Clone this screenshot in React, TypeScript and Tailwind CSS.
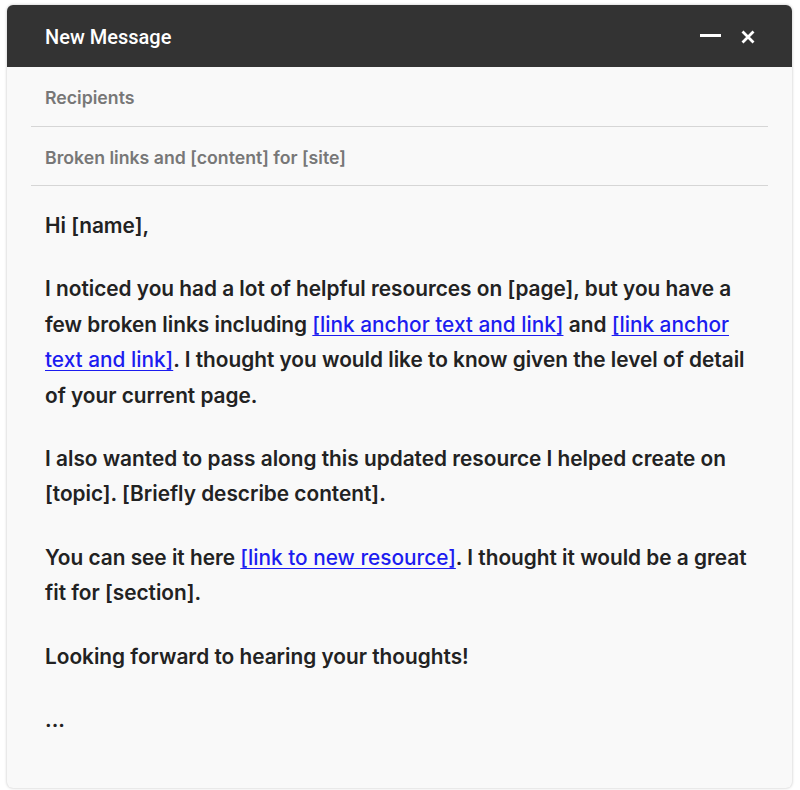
import React from "react";

const link = "text-[#1c1cf0] font-medium underline underline-offset-[3px] decoration-1";

export default function App() {
  return (
    <div className="min-h-[790px] bg-white pl-[7px] pt-[5px] font-['Inter',sans-serif]">
      <div className="w-[785px] h-[783px] rounded-md bg-[#f9f9f9] shadow-[0_0_3px_rgba(0,0,0,0.25)] overflow-hidden flex flex-col">
        <div className="h-[62px] shrink-0 bg-[#333333] flex items-center justify-between pl-[38px] pr-[37px] pt-[2px]">
          <span className="text-white text-[20px] font-medium font-['Roboto',sans-serif]">New Message</span>
          <div className="flex items-center gap-[20px]">
            <svg width="21" height="14" viewBox="0 0 21 14">
              <rect x="0" y="4" width="21" height="3" fill="#fff" />
            </svg>
            <svg width="14" height="14" viewBox="0 0 14 14">
              <path d="M1.5 1.5 L12.5 12.5 M12.5 1.5 L1.5 12.5" stroke="#fff" strokeWidth="2.8" />
            </svg>
          </div>
        </div>

        <div className="mx-[24px] h-[60px] border-b border-[#d6d6d6] flex items-center pl-[14px] pt-[4px]">
          <span className="text-[17.7px] font-semibold text-[#777]">Recipients</span>
        </div>
        <div className="mx-[24px] h-[59px] border-b border-[#d6d6d6] flex items-center pl-[14px] pt-[4px]">
          <span className="text-[17.7px] font-semibold text-[#777]">Broken links and [content] for [site]</span>
        </div>

        <div className="pl-[38px] pt-[22px] text-[20.8px] leading-[35.4px] font-semibold text-[#222] whitespace-nowrap flex flex-col gap-[28px]">
          <p>Hi [name],</p>
          <p>
            I noticed you had a lot of helpful resources on [page], but you have a<br />
            few broken links including <span className={link}>[link anchor text and link]</span> and{" "}
            <span className={link}>[link anchor </span>
            <br />
            <span className={link}>text and link]</span>. I thought you would like to know given the level of detail
            <br />
            of your current page.
          </p>
          <p>
            I also wanted to pass along this updated resource I helped create on
            <br />
            [topic]. [Briefly describe content].
          </p>
          <p>
            You can see it here <span className={link}>[link to new resource]</span>. I thought it would be a great
            <br />
            fit for [section].
          </p>
          <p>Looking forward to hearing your thoughts!</p>
          <p>...</p>
        </div>
      </div>
    </div>
  );
}
